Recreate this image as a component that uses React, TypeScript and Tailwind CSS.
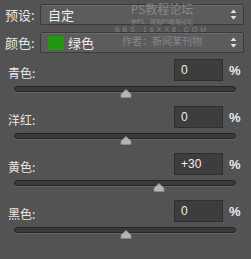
const FONT = "font-['Noto_Sans_CJK_SC','Liberation_Sans',sans-serif]";

const SLIDERS = [
  { label: "青色:", value: "0", pos: 0 },
  { label: "洋红:", value: "0", pos: 0 },
  { label: "黄色:", value: "+30", pos: 30 },
  { label: "黑色:", value: "0", pos: 0 },
];

function Arrows() {
  return (
    <svg width="7" height="11" viewBox="0 0 7 11" className="shrink-0">
      <path d="M3.5 0.5 L6.5 4 L0.5 4 Z" fill="#e2e2e2" />
      <path d="M3.5 10.5 L6.5 7 L0.5 7 Z" fill="#e2e2e2" />
    </svg>
  );
}

function SelectRow({ label, children }: { label: string; children: React.ReactNode }) {
  return (
    <div className="flex h-[21px] items-center">
      <span className="w-[40px] pl-[5px] text-[13px] leading-none text-[#e6e6e6]">{label}</span>
      <div className="flex h-[21px] w-[204px] items-center rounded-[2px] border border-[#3a3a3a] bg-[#5c5c5c] pl-[7px] pr-[6px] shadow-[inset_0_1px_0_#6a6a6a]">
        <div className="flex flex-1 items-center gap-[2px] text-[13px] leading-none text-[#eeeeee]">{children}</div>
        <Arrows />
      </div>
    </div>
  );
}

function Thumb() {
  return (
    <svg width="12" height="9" viewBox="0 0 12 9">
      <path d="M6 0.5 L11 5 L11 8.5 L1 8.5 L1 5 Z" fill="#b4b4b4" stroke="#8a8a8a" strokeWidth="0.8" />
    </svg>
  );
}

function SliderRow({ label, value, pos }: { label: string; value: string; pos: number }) {
  const x = 111 + (pos / 100) * 111;
  return (
    <div className="h-[47px]">
      <div className="flex h-[22px] items-center">
        <span className="w-[174px] pl-[8px] pt-[6px] text-[12px] leading-none text-[#e8e8e8]">{label}</span>
        <div className="flex h-[22px] w-[49px] items-center border border-[#2f2f2f] bg-[#3d3d3d] pl-[6px] text-[12px] text-[#eeeeee] font-['Liberation_Sans',sans-serif]">
          {value}
        </div>
        <span className="pl-[6px] pt-[2px] text-[13px] font-bold text-[#e8e8e8] font-['Liberation_Sans',sans-serif]">%</span>
      </div>
      <div className="relative ml-[14px] mt-[5px] h-[6px] w-[222px] rounded-[3px] border border-[#262626] bg-[#3a3a3a] shadow-[0_1px_0_#666]">
        <div className="absolute top-[2px]" style={{ left: x - 6 }}>
          <Thumb />
        </div>
      </div>
    </div>
  );
}

export default function App() {
  return (
    <div className={`relative h-[259px] w-[251px] overflow-hidden bg-[#535353] ${FONT}`}>
      <div className="flex flex-col gap-[7px] pt-[4px]">
        <SelectRow label="预设:">
          <span>自定</span>
        </SelectRow>
        <SelectRow label="颜色:">
          <span className="mr-[2px] h-[14px] w-[16px] bg-[#1f9a0f]" />
          <span>绿色</span>
        </SelectRow>
      </div>
      <div className="mt-[6px] flex flex-col">
        {SLIDERS.map((s) => (
          <SliderRow key={s.label} {...s} />
        ))}
      </div>

      {/* watermark over the select boxes */}
      <div className="pointer-events-none absolute left-[118px] top-0 flex w-[88px] flex-col items-center text-[#9a9a9a] opacity-70">
        <span className="block h-[17px] text-[12px] leading-[17px]">PS教程论坛</span>
        <span className="block h-[9px] whitespace-nowrap text-[6px] leading-[9px]">学PS，就到PS教程论坛</span>
        <span className="block h-[8px] whitespace-nowrap text-[7px] leading-[8px] tracking-[3px] font-['Liberation_Sans',sans-serif]">BBS.16XX8.COM</span>
        <span className="block h-[14px] whitespace-nowrap text-[10px] leading-[14px]">作者：新闻某刊物</span>
      </div>
    </div>
  );
}
